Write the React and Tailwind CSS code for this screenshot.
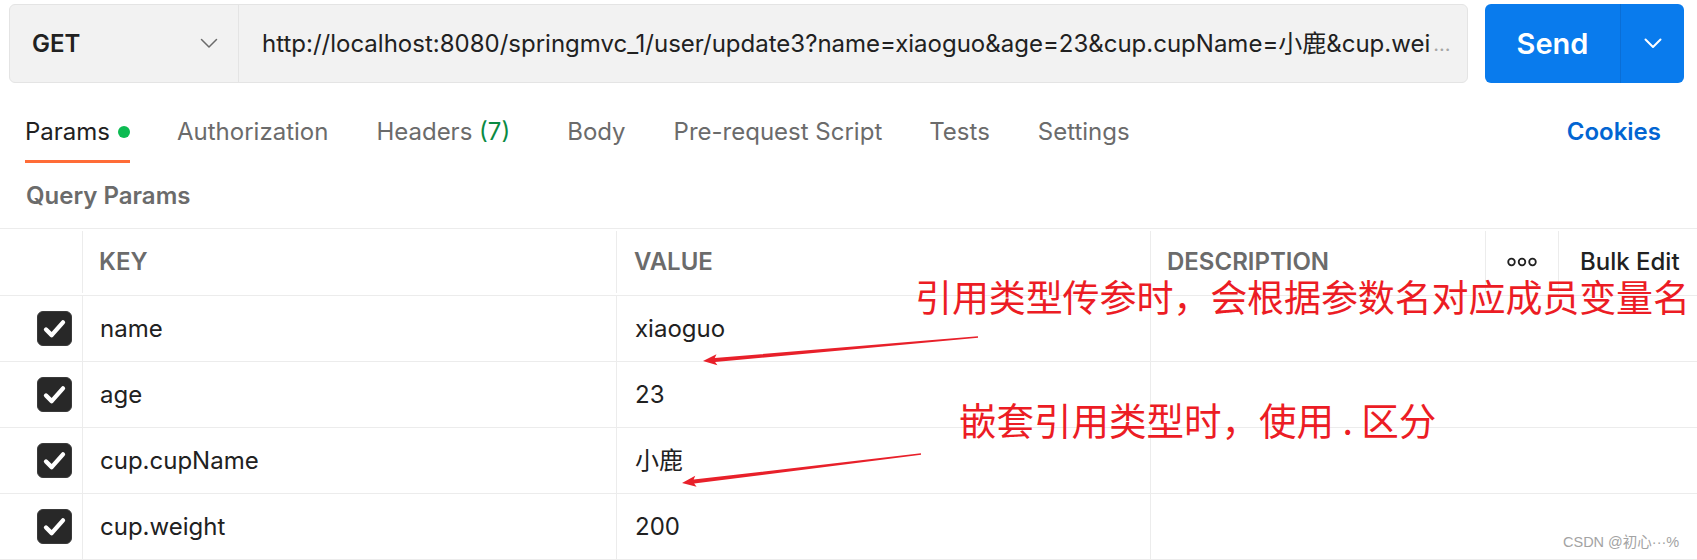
import React from "react";

function arrowPoints(tail, tip, headLen, headHalf, wTip, wTail) {
  const dx = tail[0] - tip[0];
  const dy = tail[1] - tip[1];
  const len = Math.hypot(dx, dy);
  const ux = dx / len, uy = dy / len;
  const nx = -uy, ny = ux;
  const bx = tip[0] + ux * headLen, by = tip[1] + uy * headLen;
  const pts = [
    [tip[0], tip[1]],
    [bx + nx * headHalf, by + ny * headHalf],
    [bx + ux * -2 + nx * (wTip / 2), by + uy * -2 + ny * (wTip / 2)],
    [tail[0] + nx * (wTail / 2), tail[1] + ny * (wTail / 2)],
    [tail[0] - nx * (wTail / 2), tail[1] - ny * (wTail / 2)],
    [bx + ux * -2 - nx * (wTip / 2), by + uy * -2 - ny * (wTip / 2)],
    [bx - nx * headHalf, by - ny * headHalf],
  ];
  return pts.map((p) => p.join(",")).join(" ");
}

function Chevron({ className, color, width = 1.6 }) {
  return (
    <svg className={className} viewBox="0 0 18 11" fill="none">
      <polyline points="1.5,1.5 9,9 16.5,1.5" stroke={color} strokeWidth={width} strokeLinecap="round" strokeLinejoin="round" />
    </svg>
  );
}

function Check() {
  return (
    <div className="w-[35px] h-[35px] rounded-[6px] bg-[#282828] border border-[#3a3a3a] flex items-center justify-center">
      <svg viewBox="0 0 35 35" className="w-[35px] h-[35px]" fill="none">
        <polyline points="8.5,18.5 14.5,24.5 26.5,11" stroke="#ffffff" strokeWidth="4.6" strokeLinecap="round" strokeLinejoin="round" />
      </svg>
    </div>
  );
}

const rows = [
  ["name", "xiaoguo"],
  ["age", "23"],
  ["cup.cupName", "小鹿"],
  ["cup.weight", "200"],
];

export default function App() {
  return (
    <div className="relative w-[1697px] h-[560px] bg-white overflow-hidden text-[#212121] [font-family:Inter,'Noto_Sans_CJK_SC',sans-serif]">
      {/* Top bar */}
      <div className="flex pt-[4px] pl-[9px] pr-[13px] gap-[17px]">
        <div className="flex h-[79px] w-[1459px] rounded-[6px] border border-[#e4e4e4] bg-[#f2f2f2]">
          <div className="flex items-center justify-between w-[229px] pl-[22px] pr-[20px] border-r border-[#e4e4e4]">
            <span className="text-[24px] font-semibold text-[#212121]">GET</span>
            <Chevron className="w-[18px] h-[11px]" color="#6b6b6b" width={1.5} />
          </div>
          <div className="flex items-center pl-[23px] text-[24px] whitespace-nowrap overflow-hidden">
            <span className="text-[#212121]">http://localhost:8080/springmvc_1/user/update3?name=xiaoguo&amp;age=23&amp;cup.cupName=小鹿&amp;cup.wei</span>
            <span className="ml-[3px] text-[#a6a6a6] text-[20px]">...</span>
          </div>
        </div>
        <div className="flex h-[79px] w-[199px] rounded-[6px] bg-[#097bed] text-white">
          <div className="w-[136px] flex items-center justify-center border-r border-[#0a6ed6]">
            <span className="text-[29px] font-semibold">Send</span>
          </div>
          <div className="flex-1 flex items-center justify-center">
            <Chevron className="w-[18px] h-[11px]" color="#ffffff" width={2} />
          </div>
        </div>
      </div>

      {/* Tabs */}
      <div className="flex items-start mt-[33px] pl-[25px] pr-[36px] text-[24px] leading-[32px]">
        <div className="flex items-center gap-[8px] pb-[12px] border-b-[3px] border-[#ff6c37] text-[#212121]">
          <span>Params</span>
          <span className="w-[12px] h-[12px] rounded-full bg-[#0cbb52]" />
        </div>
        <div className="ml-[47px] text-[#6b6b6b]">Authorization</div>
        <div className="ml-[48px] text-[#6b6b6b]">
          Headers <span className="text-[#0a8a43]">(7)</span>
        </div>
        <div className="ml-[57px] text-[#6b6b6b]">Body</div>
        <div className="ml-[48px] text-[#6b6b6b]">Pre-request Script</div>
        <div className="ml-[47px] text-[#6b6b6b]">Tests</div>
        <div className="ml-[48px] text-[#6b6b6b]">Settings</div>
        <div className="ml-auto font-semibold text-[#0265d2]">Cookies</div>
      </div>

      {/* Query Params */}
      <div className="mt-[18px] pl-[26px] text-[24px] leading-[30px] font-semibold text-[#6b6b6b]">Query Params</div>

      {/* Table */}
      <div className="mt-[17px] border-t border-[#ececec]">
        <div className="flex h-[67px] border-b border-[#ececec] text-[24px] font-semibold">
          <div className="w-[83px] border-r border-[#ececec] my-[2px]" />
          <div className="w-[534px] border-r border-[#ececec] my-[2px] flex items-center pl-[16px] text-[#6b6b6b]">KEY</div>
          <div className="w-[534px] border-r border-[#ececec] my-[2px] flex items-center pl-[17px] text-[#6b6b6b]">VALUE</div>
          <div className="w-[335px] border-r border-[#ececec] my-[2px] flex items-center pl-[16px] text-[#6b6b6b]">DESCRIPTION</div>
          <div className="w-[73px] border-r border-[#ececec] my-[2px] flex items-center justify-center">
            <svg viewBox="0 0 30 10" className="w-[30px] h-[10px]" fill="none">
              <circle cx="4.5" cy="5" r="3.3" stroke="#212121" strokeWidth="1.8" />
              <circle cx="15" cy="5" r="3.3" stroke="#212121" strokeWidth="1.8" />
              <circle cx="25.5" cy="5" r="3.3" stroke="#212121" strokeWidth="1.8" />
            </svg>
          </div>
          <div className="flex-1 flex items-center pl-[21px] font-medium text-[#212121]">Bulk Edit</div>
        </div>
        {rows.map(([k, v]) => (
          <div key={k} className="flex h-[66px] border-b border-[#ececec] text-[24px] text-[#212121]">
            <div className="w-[83px] border-r border-[#ececec] flex items-center pl-[37px]">
              <Check />
            </div>
            <div className="w-[534px] border-r border-[#ececec] flex items-center pl-[17px]">{k}</div>
            <div className="w-[534px] border-r border-[#ececec] flex items-center pl-[18px]">{v}</div>
            <div className="flex-1" />
          </div>
        ))}
      </div>

      {/* Annotations */}
      <div className="absolute left-[915px] top-[271px] text-[37px] leading-[50px] tracking-[-0.1px] text-[#ec1c24] whitespace-nowrap [font-family:'Noto_Sans_CJK_SC',sans-serif]">
        引用类型传参时，会根据参数名对应成员变量名
      </div>
      <div className="absolute left-[959px] top-[394px] text-[37.5px] leading-[50px] text-[#ec1c24] whitespace-nowrap [font-family:'Noto_Sans_CJK_SC',sans-serif]">
        嵌套引用类型时，使用 . 区分
      </div>
      <svg className="absolute left-0 top-0 w-[1697px] h-[560px] pointer-events-none" viewBox="0 0 1697 560">
        <polygon points={arrowPoints([978, 337], [703, 361], 14, 5.5, 4, 1.4)} fill="#e8202a" />
        <polygon points={arrowPoints([921, 454], [682, 483], 14, 5.5, 4, 1.4)} fill="#e8202a" />
      </svg>

      <div className="absolute left-[1563px] top-[532px] text-[14.5px] leading-[20px] text-[#a3a3a3] whitespace-nowrap [font-family:'Liberation_Sans','Noto_Sans_CJK_SC',sans-serif]">
        CSDN @初心···%
      </div>
    </div>
  );
}
